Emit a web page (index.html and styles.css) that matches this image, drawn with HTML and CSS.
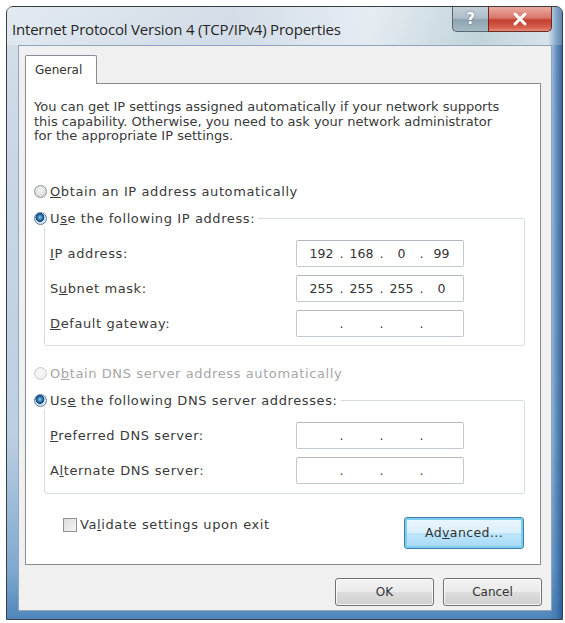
FILE: index.html
```html
<!DOCTYPE html>
<html>
<head>
<meta charset="utf-8">
<link rel="stylesheet" href="styles.css">
</head>
<body>
<div class="window">
  <div class="titlebar">
    <div class="title">Internet Protocol Version 4 (TCP/IPv4) Properties</div>
    <div class="caption-btns">
      <div class="cbtn help">?</div>
      <div class="cbtn close">
        <svg width="16" height="14" viewBox="0 0 16 14"><path d="M3 2 L13 12 M13 2 L3 12" stroke="#fff" stroke-width="3" stroke-linecap="round"/></svg>
      </div>
    </div>
  </div>
  <div class="client">
    <div class="tabs"><div class="tab">General</div></div>
    <div class="panel">
      <p class="intro">You can get IP settings assigned automatically if your network supports<br>this capability. Otherwise, you need to ask your network administrator<br>for the appropriate IP settings.</p>

      <div class="radio-row first"><span class="radio"></span><span><u>O</u>btain an IP address automatically</span></div>
      <fieldset class="group">
        <legend><span class="radio checked"></span><span>U<u>s</u>e the following IP address:</span></legend>
        <div class="rows">
          <label class="lbl"><u>I</u>P address:</label>
          <div class="ipbox"><span class="f">192</span><span class="d">.</span><span class="f">168</span><span class="d">.</span><span class="f">0</span><span class="d">.</span><span class="f">99</span></div>
          <label class="lbl">S<u>u</u>bnet mask:</label>
          <div class="ipbox"><span class="f">255</span><span class="d">.</span><span class="f">255</span><span class="d">.</span><span class="f">255</span><span class="d">.</span><span class="f">0</span></div>
          <label class="lbl"><u>D</u>efault gateway:</label>
          <div class="ipbox"><span class="f"></span><span class="d">.</span><span class="f"></span><span class="d">.</span><span class="f"></span><span class="d">.</span><span class="f"></span></div>
        </div>
      </fieldset>

      <div class="radio-row dns disabled"><span class="radio dis"></span><span>O<u>b</u>tain DNS server address automatically</span></div>
      <fieldset class="group last">
        <legend><span class="radio checked"></span><span>Us<u>e</u> the following DNS server addresses:</span></legend>
        <div class="rows">
          <label class="lbl"><u>P</u>referred DNS server:</label>
          <div class="ipbox"><span class="f"></span><span class="d">.</span><span class="f"></span><span class="d">.</span><span class="f"></span><span class="d">.</span><span class="f"></span></div>
          <label class="lbl">A<u>l</u>ternate DNS server:</label>
          <div class="ipbox"><span class="f"></span><span class="d">.</span><span class="f"></span><span class="d">.</span><span class="f"></span><span class="d">.</span><span class="f"></span></div>
        </div>
      </fieldset>

      <div class="bottom-row">
        <div class="check-row"><span class="checkbox"></span><span>Va<u>l</u>idate settings upon exit</span></div>
        <div class="btn default">Ad<u>v</u>anced...</div>
      </div>
    </div>
    <div class="dlg-btns">
      <div class="btn ok">OK</div>
      <div class="btn cancel">Cancel</div>
    </div>
  </div>
</div>
</body>
</html>
```

FILE: styles.css
```css
* { box-sizing: border-box; }
html, body { margin: 0; padding: 0; background: #ffffff; }
body { font-family: "DejaVu Sans", "Noto Sans", sans-serif; color: #3a3a3a; }

.window {
  margin: 6px 0 0 6px;
  width: 557px;
  height: 614px;
  border: 1px solid #3a3d42;
  border-radius: 7px 7px 0 0;
  background:
    linear-gradient(to right, rgba(255,255,255,0) 97.5%, rgba(64,118,172,0.75) 99%, rgba(40,90,150,0.9) 100%),
    linear-gradient(to bottom, #d6e0ea 0%, #cbd8e5 20%, #bccfe2 70%, #7fa9cf 92%, #4f86ba 100%);
  display: flex;
  flex-direction: column;
}

.titlebar {
  height: 38px;
  display: flex;
  justify-content: space-between;
  align-items: flex-start;
  padding-right: 10px;
  background: linear-gradient(100deg, rgba(255,255,255,0.3) 0%, rgba(200,210,220,0.15) 40%, rgba(255,255,255,0.4) 65%, rgba(150,190,180,0.3) 85%, rgba(255,255,255,0.2) 100%);
}
.title {
  padding: 12px 0 0 5px;
  font-family: "Open Sans", "Noto Sans", sans-serif;
  font-size: 15px;
  color: #252525;
  letter-spacing: -0.2px;
  white-space: nowrap;
}
.caption-btns { display: flex; }
.cbtn {
  height: 25px;
  display: flex;
  align-items: center;
  justify-content: center;
  border: 1px solid #5b6670;
  border-top: none;
  color: #fff;
  font-weight: bold;
}
.cbtn.help {
  width: 36px;
  border-radius: 0 0 0 5px;
  border-right: none;
  font-size: 15px;
  background: linear-gradient(to bottom, #c3d0d8 0%, #aebec9 45%, #8ea3b0 55%, #a5b9c4 100%);
  text-shadow: 0 0 2px #53677a;
}
.cbtn.close {
  width: 64px;
  border-radius: 0 0 5px 0;
  border-color: #6b2a24;
  background: linear-gradient(to bottom, #e9a99e 0%, #d9786a 45%, #c23f30 55%, #d65e4c 85%, #e58e7a 100%);
}

.client {
  flex: 1;
  margin: 0 10px 8px 11px;
  border: 1px solid #8fa5bb;
  background: #f0f0f0;
  padding: 9px 9px 0 6px;
  display: flex;
  flex-direction: column;
}

.tabs { display: flex; }
.tab {
  width: 72px;
  height: 29px;
  margin-bottom: -1px;
  position: relative;
  z-index: 1;
  background: #fff;
  border: 1px solid #898c95;
  border-bottom: none;
  border-radius: 2px 2px 0 0;
  font-size: 12px;
  padding: 7px 0 0 9px;
  color: #333;
}

.panel {
  width: 516px;
  background: #fff;
  border: 1px solid #898c95;
  padding: 16px 0 15px 8px;
  font-size: 13px;
  letter-spacing: 0.6px;
}
.intro {
  margin: 0;
  line-height: 14.5px;
  white-space: nowrap;
  letter-spacing: 0;
}

.radio-row, legend, .check-row {
  display: flex;
  align-items: center;
  height: 16px;
  gap: 3px;
  white-space: nowrap;
}
.radio-row.first { margin-top: 40px; }
.radio-row.dns { margin-top: 20px; }
.disabled { color: #a6a6a6; }

.radio {
  width: 13px;
  height: 13px;
  border-radius: 50%;
  border: 1px solid #8e9297;
  background: radial-gradient(circle at 50% 40%, #f4f4f4 0%, #dcdcdc 70%, #cfcfcf 100%);
  flex: none;
}
.radio.dis {
  border-color: #c8cacc;
  background: radial-gradient(circle at 50% 40%, #f7f7f7 0%, #ececec 100%);
}
.radio.checked {
  border-color: #5a7fa8;
  background:
    radial-gradient(circle at 45% 40%, #8ed0f0 0%, #2a6ea8 30%, #0f3f72 48%, rgba(255,255,255,0) 52%),
    radial-gradient(circle, #e6eef6 0%, #cdd9e4 100%);
}

.group {
  margin: 11px 15px 0 10px;
  padding: 13px 60px 8px 5px;
  border: 1px solid #d5dbe1;
  border-radius: 3px;
  min-width: 0;
}
.group.last { padding-bottom: 9px; }
legend {
  margin-left: -16px;
  padding: 0 3px 0 0;
  background: #fff;
}
.rows {
  display: grid;
  grid-template-columns: 1fr 168px;
  grid-auto-rows: 27px;
  row-gap: 8px;
  align-items: center;
}
.lbl { white-space: nowrap; }
.ipbox {
  height: 27px;
  border: 1px solid #c3c8ce;
  border-top-color: #b3b8be;
  border-radius: 2px;
  display: flex;
  align-items: center;
  padding-left: 9px;
  font-size: 12.5px;
  letter-spacing: 0;
  color: #333;
}
.ipbox .f { width: 31px; text-align: center; }
.ipbox .d { width: 9px; text-align: center; }

.bottom-row {
  margin: 23px 16px 0 29px;
  display: flex;
  justify-content: space-between;
  align-items: flex-start;
}
.check-row { height: 16px; margin-top: 0; }
.checkbox {
  width: 14px;
  height: 14px;
  border: 1px solid #8e9297;
  background: linear-gradient(135deg, #dcdcdc, #f4f4f4);
  flex: none;
}

.btn {
  border: 1px solid #707070;
  border-radius: 3px;
  background: linear-gradient(to bottom, #f2f2f2 0%, #ebebeb 49%, #dddddd 51%, #cfcfcf 100%);
  display: flex;
  align-items: center;
  justify-content: center;
  font-size: 12px;
  letter-spacing: 0;
  color: #333;
  box-shadow: inset 0 0 0 1px rgba(255,255,255,0.8);
}
.btn.default {
  width: 120px;
  height: 32px;
  font-size: 12.5px;
  letter-spacing: 0.4px;
  border-color: #3c7fb1;
  background: linear-gradient(to bottom, #eaf6fd 0%, #d9f0fc 49%, #bee6fd 51%, #a7d9f5 100%);
  box-shadow: inset 0 0 0 2px #7fcdee;
}
.dlg-btns {
  margin-top: 13px;
  display: flex;
  justify-content: flex-end;
  gap: 9px;
}
.btn.ok, .btn.cancel { width: 99px; height: 28px; }
```
